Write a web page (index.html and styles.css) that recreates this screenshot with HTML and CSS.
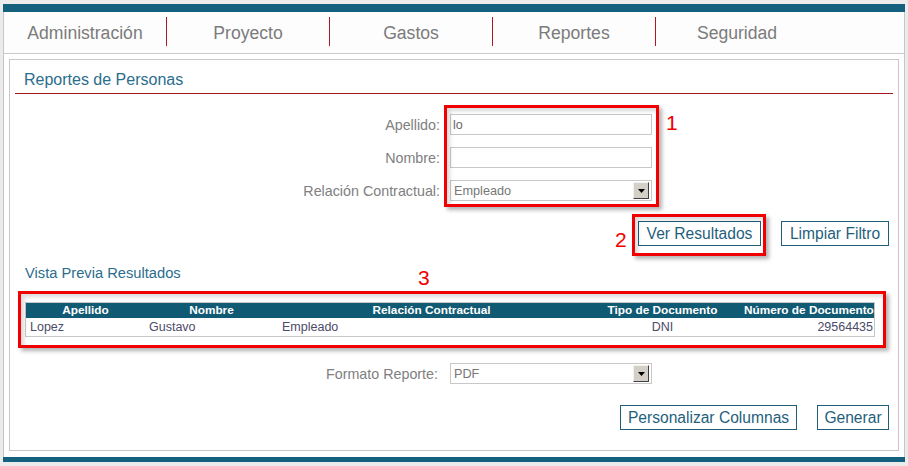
FILE: index.html
```html
<!DOCTYPE html>
<html lang="es">
<head>
<meta charset="utf-8">
<title>Reportes de Personas</title>
<link rel="stylesheet" href="styles.css">
</head>
<body>
<div class="app">
  <div class="topbar"></div>
  <div class="frame">
    <nav class="nav">
      <a class="nav-item">Administración</a>
      <a class="nav-item">Proyecto</a>
      <a class="nav-item">Gastos</a>
      <a class="nav-item">Reportes</a>
      <a class="nav-item">Seguridad</a>
    </nav>
    <section class="panel">
      <h2 class="panel-title">Reportes de Personas</h2>

      <div class="form">
        <label class="lbl">Apellido:</label>
        <input class="field" type="text" value="lo">
        <label class="lbl">Nombre:</label>
        <input class="field" type="text" value="">
        <label class="lbl">Relación Contractual:</label>
        <div class="select"><span class="select-text">Empleado</span><span class="select-arrow"><svg width="7" height="4" viewBox="0 0 7 4"><path d="M0 0H7L3.5 4Z" fill="#000"/></svg></span></div>
      </div>

      <div class="actions">
        <button class="btn btn-ver">Ver Resultados</button>
        <button class="btn btn-limpiar">Limpiar Filtro</button>
      </div>

      <h3 class="sub">Vista Previa Resultados</h3>

      <div class="results">
        <div class="results-head">
          <div class="cell c">Apellido</div>
          <div class="cell c">Nombre</div>
          <div class="cell c">Relación Contractual</div>
          <div class="cell c">Tipo de Documento</div>
          <div class="cell c">Número de Documento</div>
        </div>
        <div class="results-row">
          <div class="cell">Lopez</div>
          <div class="cell">Gustavo</div>
          <div class="cell">Empleado</div>
          <div class="cell c">DNI</div>
          <div class="cell r">29564435</div>
        </div>
      </div>

      <div class="form form-format">
        <label class="lbl lbl-format">Formato Reporte:</label>
        <div class="select"><span class="select-text">PDF</span><span class="select-arrow"><svg width="7" height="4" viewBox="0 0 7 4"><path d="M0 0H7L3.5 4Z" fill="#000"/></svg></span></div>
      </div>

      <div class="actions actions-bottom">
        <button class="btn btn-cols">Personalizar Columnas</button>
        <button class="btn btn-gen">Generar</button>
      </div>

      <div class="mark mark-1"></div>
      <div class="mark mark-2"></div>
      <div class="mark mark-3"></div>
      <span class="num num-1">1</span>
      <span class="num num-2">2</span>
      <span class="num num-3">3</span>
    </section>
  </div>
  <div class="bottombar"></div>
</div>
</body>
</html>
```
FILE: styles.css
```css
html, body {
  margin: 0;
  padding: 0;
}
body {
  background: #ebebeb;
  font-family: "Liberation Sans", Arial, sans-serif;
}
.app {
  margin: 4px 0 0 3px;
  width: 902px;
}
.topbar {
  height: 8px;
  background: #13607f;
}
.bottombar {
  height: 5px;
  background: #13607f;
}
.frame {
  background: #fff;
  border-left: 1px solid #c6c6c6;
  border-right: 1px solid #c6c6c6;
  padding-bottom: 6px;
}
.nav {
  display: flex;
  height: 41px;
  border-bottom: 1px solid #cbcbcb;
  background: #fdfdfd;
}
.nav-item {
  box-sizing: border-box;
  width: 163px;
  height: 29px;
  margin-top: 5px;
  padding-top: 3px;
  line-height: 26px;
  text-align: center;
  font-size: 17.6px;
  color: #7b7b7b;
  border-left: 1px solid #b01820;
}
.nav-item:first-child {
  width: 162px;
  border-left: none;
}
.panel {
  position: relative;
  box-sizing: border-box;
  height: 392px;
  margin: 5px 5px 0;
  border: 1px solid #c8c8c8;
}
.panel-title {
  margin: 0 5px;
  padding: 10px 0 3px 9px;
  font-size: 16px;
  font-weight: normal;
  line-height: 20px;
  color: #2b6d8d;
  border-bottom: 1px solid #a5151b;
}
.form {
  display: grid;
  grid-template-columns: 430px 202px;
  column-gap: 10px;
  row-gap: 12px;
  align-items: center;
  margin-top: 20px;
}
.lbl {
  text-align: right;
  font-size: 14.3px;
  color: #808080;
  white-space: nowrap;
}
.lbl-format {
  padding-right: 2px;
}
.field {
  box-sizing: border-box;
  width: 202px;
  height: 21px;
  margin: 0;
  padding: 0 2px;
  border: 1px solid #c8c8c8;
  font-family: inherit;
  font-size: 12.5px;
  color: #666;
  background: #fff;
  outline: none;
}
.select {
  box-sizing: border-box;
  display: flex;
  align-items: center;
  width: 202px;
  height: 21px;
  padding: 0 2px 0 3px;
  border: 1px solid #c8c8c8;
  font-size: 12.7px;
  color: #777;
  background: #fff;
}
.select-text {
  flex: 1;
}
.select-arrow {
  box-sizing: border-box;
  display: flex;
  align-items: center;
  justify-content: center;
  width: 16px;
  height: 17px;
  background: #d4d0c8;
  border: 1px solid;
  border-color: #f4f2ee #404040 #404040 #f4f2ee;
}
.actions {
  display: flex;
  justify-content: flex-end;
  gap: 20px;
  margin: 20px 9px 0 0;
}
.btn {
  box-sizing: border-box;
  height: 25px;
  margin: 0;
  padding: 0;
  border: 1px solid #1e5e79;
  border-radius: 0;
  background: #fff;
  color: #1f5f7d;
  font-family: inherit;
  font-size: 15.6px;
  line-height: 23px;
  text-align: center;
}
.btn-ver {
  width: 123px;
}
.btn-limpiar {
  width: 108px;
}
.btn-cols {
  width: 177px;
}
.btn-gen {
  width: 72px;
}
.sub {
  margin: 18px 0 0 15px;
  font-size: 14.7px;
  font-weight: normal;
  line-height: 18px;
  color: #2b6d8d;
}
.results {
  box-sizing: border-box;
  width: 850px;
  margin: 20px 0 0 15px;
  border: 1px solid #c8c8c8;
}
.results-head,
.results-row {
  display: grid;
  grid-template-columns: 119px 133px 307px 155px 134px;
}
.results-head {
  height: 15px;
  line-height: 15px;
  background: #115a74;
  color: #fff;
  font-size: 11.8px;
  font-weight: bold;
}
.results-row {
  height: 18px;
  line-height: 18px;
  font-size: 12.5px;
  color: #4c4c6a;
}
.cell {
  padding: 0 4px;
  white-space: nowrap;
  overflow: hidden;
}
.cell.c {
  text-align: center;
}
.cell.r {
  text-align: right;
  padding-right: 1px;
}
.form-format {
  margin-top: 26px;
}
.actions-bottom {
  margin-top: 21px;
}
.mark {
  position: absolute;
  box-sizing: border-box;
  border: 3px solid #f00000;
  box-shadow: 3px 3px 4px rgba(0, 0, 0, 0.3), inset 3px 3px 4px rgba(0, 0, 0, 0.15);
  pointer-events: none;
}
.mark-1 {
  left: 434px;
  top: 45px;
  width: 215px;
  height: 102px;
}
.mark-2 {
  left: 622px;
  top: 154px;
  width: 134px;
  height: 42px;
}
.mark-3 {
  left: 8px;
  top: 231px;
  width: 868px;
  height: 57px;
}
.num {
  position: absolute;
  font-size: 21px;
  line-height: 21px;
  color: #f00000;
}
.num-1 {
  left: 656px;
  top: 52px;
}
.num-2 {
  left: 605px;
  top: 169px;
}
.num-3 {
  left: 408px;
  top: 207px;
}
```
